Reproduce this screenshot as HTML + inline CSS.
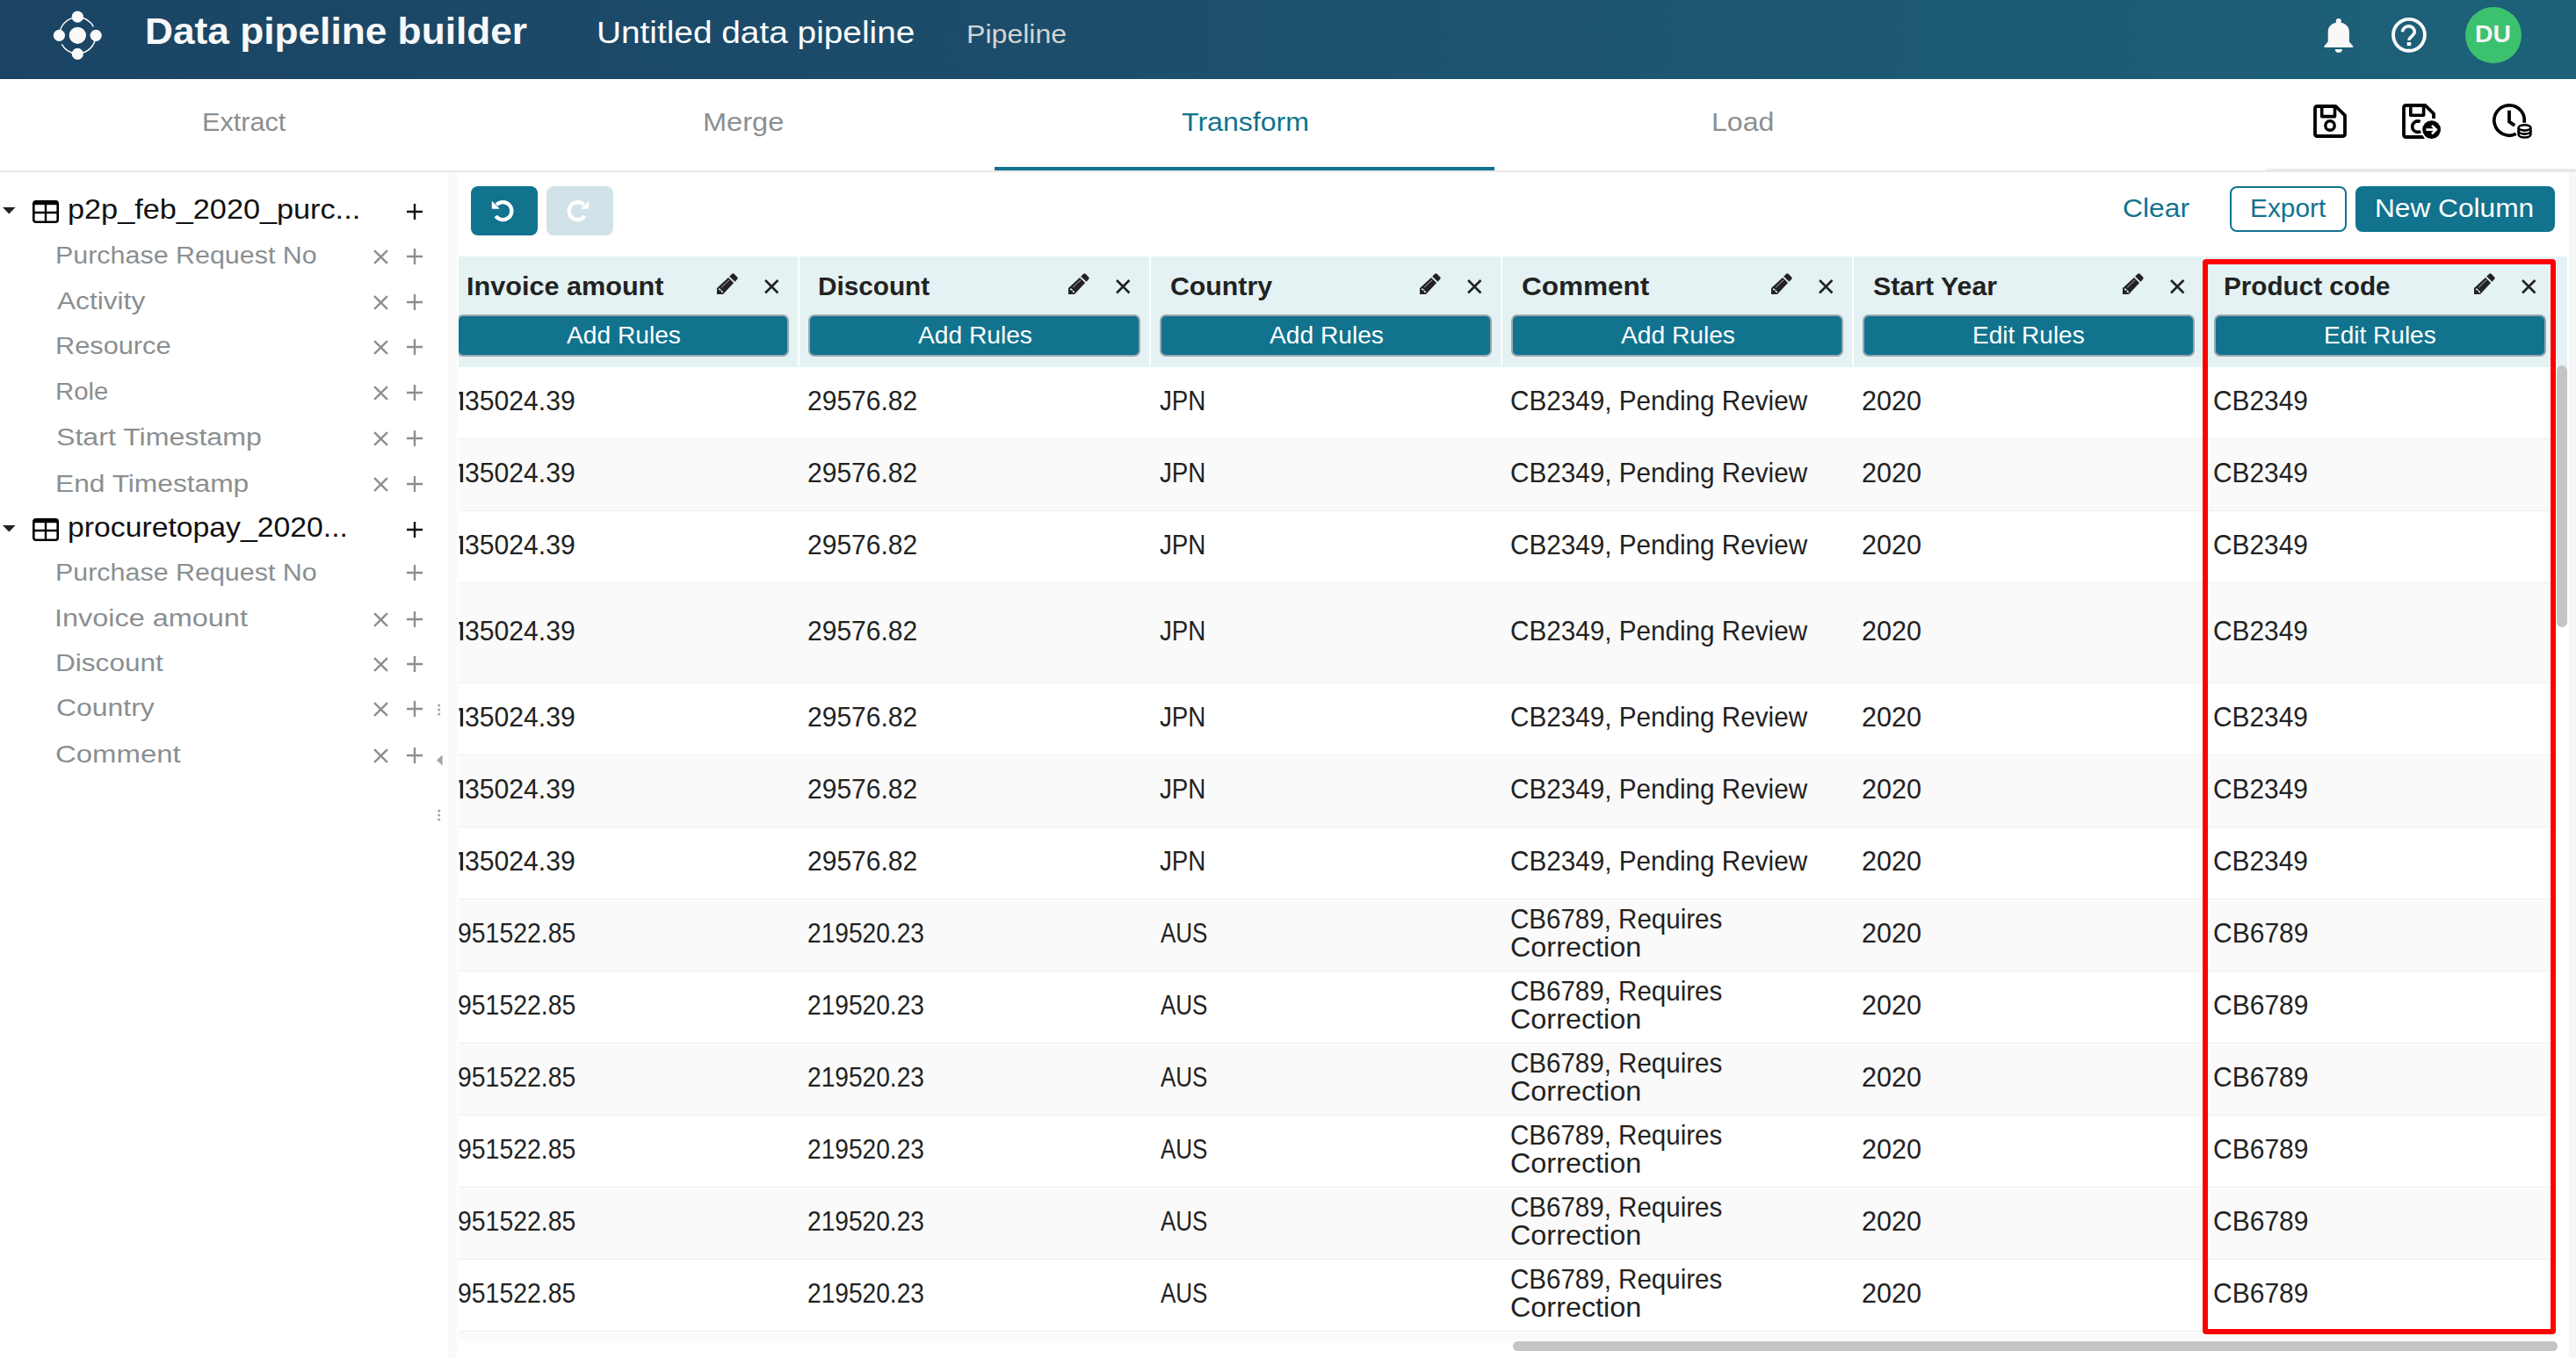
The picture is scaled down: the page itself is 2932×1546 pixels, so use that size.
<!DOCTYPE html><html><head><meta charset="utf-8"><style>
*{margin:0;padding:0}
html,body{width:2932px;height:1546px;overflow:hidden;background:#fff;font-family:"Liberation Sans",sans-serif}
.t{position:absolute;white-space:pre;line-height:1;transform-origin:0 0}
.ic{position:absolute;overflow:visible}
.btn{position:absolute}
.row{position:absolute;left:0;width:2910px;box-sizing:border-box;border-bottom:1.6px solid #eeeeee}
.rb{position:absolute;top:358px;width:378px;height:48px;box-sizing:border-box;border:2px solid #9aa6ae;border-radius:7px;background:#11738e}
.sep{position:absolute;top:292px;width:2px;height:125px;background:#fff}
</style></head><body>
<div style="position:absolute;left:0;top:0;width:2932px;height:90px;background:linear-gradient(90deg,#1b4464 0%,#1c4d6b 40%,#1d6279 100%)"></div>
<svg class="ic" style="left:0;top:0" width="140" height="90" viewBox="0 0 140 90">
<g fill="#fafafa"><circle cx="88.3" cy="40.3" r="9.6"/><circle cx="88.3" cy="19.2" r="6.6"/><circle cx="88.3" cy="61.3" r="6.6"/><circle cx="67.4" cy="40.3" r="6.6"/><circle cx="109.2" cy="40.3" r="6.6"/></g>
<path d="M67.78 38.50A20.6 20.6 0 0 1 86.50 19.78 M90.10 19.78A20.6 20.6 0 0 1 106.32 30.31 M108.82 42.10A20.6 20.6 0 0 1 90.10 60.82 M86.50 60.82A20.6 20.6 0 0 1 70.28 50.29" fill="none" stroke="#fafafa" stroke-width="1.5"/>
</svg><svg class="ic" style="left:2635px;top:10px" width="60" height="60" viewBox="0 0 60 60">
<circle cx="26.8" cy="14" r="3.1" fill="#f8f8f8"/>
<path fill="#f8f8f8" d="M14.7 37.6V26.3C14.7 19.8 19.9 15.6 26.8 15.6C33.7 15.6 38.9 19.8 38.9 26.3V37.6L43.2 42.4V44H10.4V42.4Z"/>
<path fill="#f8f8f8" d="M22.8 45.9H30.9A4.05 3.9 0 0 1 22.8 45.9Z"/>
</svg><svg class="ic" style="left:2722px;top:20px" width="40" height="40" viewBox="0 0 40 40">
<circle cx="19.95" cy="19.85" r="17.95" fill="none" stroke="#fafafa" stroke-width="3.9"/>
<path d="M12.4 16.3A7.3 7.3 0 0 1 19.7 9.9A6.6 6.3 0 0 1 26.3 16.2C26.3 20.3 20 22 20 26.1" fill="none" stroke="#fafafa" stroke-width="3.6"/>
<rect x="17.7" y="28" width="4.5" height="4.1" fill="#fafafa"/>
</svg><div style="position:absolute;left:2806px;top:8px;width:64px;height:64px;border-radius:50%;background:#3cc26f"></div>
<div style="position:absolute;left:0;top:194px;width:2932px;height:2px;background:#e8e8e8"></div>
<div style="position:absolute;left:2580px;top:192px;width:352px;height:2px;background:#ebebeb"></div>
<div style="position:absolute;left:1132px;top:190px;width:569px;height:4px;background:#11738e"></div>
<svg class="ic" style="left:2633px;top:119px" width="38" height="38" viewBox="0 0 38 38">
<path d="M4 2H25.5L36 12.3V33.5Q36 36 33.5 36H4.5Q2 36 2 33.5V4.5Q2 2 4.5 2Z" fill="none" stroke="#000" stroke-width="3.8" stroke-linejoin="round"/>
<path d="M9.7 2.5V13.6H24.5V2.5" fill="none" stroke="#000" stroke-width="3.6" stroke-linejoin="round"/>
<circle cx="19" cy="24" r="5.2" fill="none" stroke="#000" stroke-width="3.4"/>
</svg><svg class="ic" style="left:2734px;top:118px" width="46" height="42" viewBox="0 0 46 42">
<path d="M25.5 38H4.5Q2 38 2 35.5V4.5Q2 2 4.5 2H26.5L36 11.5V17" fill="none" stroke="#000" stroke-width="3.8" stroke-linejoin="round"/>
<path d="M9.8 2.5V13.2H24.6V2.5" fill="none" stroke="#000" stroke-width="3.6" stroke-linejoin="round"/>
<path d="M20.6 20.6 A6.2 6.2 0 1 0 21.2 31.4" fill="none" stroke="#000" stroke-width="3.6"/>
<circle cx="33.6" cy="29.6" r="12.2" fill="#fff"/>
<circle cx="33.6" cy="29.6" r="10.4" fill="#000"/>
<path d="M27.4 29.6H38.4M34 24.8L38.8 29.6L34 34.4" fill="none" stroke="#fff" stroke-width="2.6"/>
</svg><svg class="ic" style="left:2836px;top:117px" width="48" height="42" viewBox="0 0 48 42">
<path d="M37 22.8A17.2 17.2 0 1 0 27.7 35.4" fill="none" stroke="#000" stroke-width="3.7"/>
<path d="M20 8.8V21.5L26.2 25.9" fill="none" stroke="#000" stroke-width="3.8"/>
<g fill="none" stroke="#000" stroke-width="2.6">
<ellipse cx="37.5" cy="28.4" rx="6.9" ry="3.2"/>
<path d="M30.6 28.4V36C30.6 38.1 33.7 39.5 37.5 39.5S44.4 38.1 44.4 36V28.4"/>
<path d="M30.6 32.1C30.6 34.2 33.7 35.6 37.5 35.6S44.4 34.2 44.4 32.1"/>
</g>
</svg>
<div style="position:absolute;left:510px;top:196px;width:10px;height:1350px;background:#f9f9f9"></div>
<div style="position:absolute;left:2924px;top:196px;width:8px;height:1350px;background:#f7f7f7"></div>
<svg class="ic" style="left:2.6px;top:236px" width="15" height="8" viewBox="0 0 15 8"><path d="M0 0H14.6L7.3 7.5Z" fill="#222"/></svg><svg class="ic" style="left:37px;top:228px" width="30" height="26" viewBox="0 0 30 26"><rect x="1.3" y="1.3" width="27.4" height="23.4" rx="2.5" fill="none" stroke="#000" stroke-width="2.6"/><rect x="1" y="1" width="28" height="4.2" fill="#000"/><path d="M15 3V25M1.5 14H28.5" stroke="#000" stroke-width="2.4"/></svg><svg class="ic" style="left:2.6px;top:598px" width="15" height="8" viewBox="0 0 15 8"><path d="M0 0H14.6L7.3 7.5Z" fill="#222"/></svg><svg class="ic" style="left:37px;top:590px" width="30" height="26" viewBox="0 0 30 26"><rect x="1.3" y="1.3" width="27.4" height="23.4" rx="2.5" fill="none" stroke="#000" stroke-width="2.6"/><rect x="1" y="1" width="28" height="4.2" fill="#000"/><path d="M15 3V25M1.5 14H28.5" stroke="#000" stroke-width="2.4"/></svg><svg class="ic" style="left:463px;top:231.9px" width="18" height="18" viewBox="0 0 18 18"><path d="M9.0 0V18M0 9.0H18" stroke="#111" stroke-width="2.4"/></svg><svg class="ic" style="left:463px;top:594px" width="18" height="18" viewBox="0 0 18 18"><path d="M9.0 0V18M0 9.0H18" stroke="#111" stroke-width="2.4"/></svg><svg class="ic" style="left:424.5px;top:283.8px" width="17" height="17" viewBox="0 0 16 16"><path d="M1 1L15 15M15 1L1 15" stroke="#8a8f91" stroke-width="2.26" stroke-linecap="butt"/></svg><svg class="ic" style="left:463px;top:282.8px" width="18" height="18" viewBox="0 0 18 18"><path d="M9.0 0V18M0 9.0H18" stroke="#8a8f91" stroke-width="2.4"/></svg><svg class="ic" style="left:424.5px;top:336.0px" width="17" height="17" viewBox="0 0 16 16"><path d="M1 1L15 15M15 1L1 15" stroke="#8a8f91" stroke-width="2.26" stroke-linecap="butt"/></svg><svg class="ic" style="left:463px;top:335.0px" width="18" height="18" viewBox="0 0 18 18"><path d="M9.0 0V18M0 9.0H18" stroke="#8a8f91" stroke-width="2.4"/></svg><svg class="ic" style="left:424.5px;top:387.1px" width="17" height="17" viewBox="0 0 16 16"><path d="M1 1L15 15M15 1L1 15" stroke="#8a8f91" stroke-width="2.26" stroke-linecap="butt"/></svg><svg class="ic" style="left:463px;top:386.1px" width="18" height="18" viewBox="0 0 18 18"><path d="M9.0 0V18M0 9.0H18" stroke="#8a8f91" stroke-width="2.4"/></svg><svg class="ic" style="left:424.5px;top:439.3px" width="17" height="17" viewBox="0 0 16 16"><path d="M1 1L15 15M15 1L1 15" stroke="#8a8f91" stroke-width="2.26" stroke-linecap="butt"/></svg><svg class="ic" style="left:463px;top:438.3px" width="18" height="18" viewBox="0 0 18 18"><path d="M9.0 0V18M0 9.0H18" stroke="#8a8f91" stroke-width="2.4"/></svg><svg class="ic" style="left:424.5px;top:491.1px" width="17" height="17" viewBox="0 0 16 16"><path d="M1 1L15 15M15 1L1 15" stroke="#8a8f91" stroke-width="2.26" stroke-linecap="butt"/></svg><svg class="ic" style="left:463px;top:490.1px" width="18" height="18" viewBox="0 0 18 18"><path d="M9.0 0V18M0 9.0H18" stroke="#8a8f91" stroke-width="2.4"/></svg><svg class="ic" style="left:424.5px;top:543.4px" width="17" height="17" viewBox="0 0 16 16"><path d="M1 1L15 15M15 1L1 15" stroke="#8a8f91" stroke-width="2.26" stroke-linecap="butt"/></svg><svg class="ic" style="left:463px;top:542.4px" width="18" height="18" viewBox="0 0 18 18"><path d="M9.0 0V18M0 9.0H18" stroke="#8a8f91" stroke-width="2.4"/></svg><svg class="ic" style="left:463px;top:643.4px" width="18" height="18" viewBox="0 0 18 18"><path d="M9.0 0V18M0 9.0H18" stroke="#8a8f91" stroke-width="2.4"/></svg><svg class="ic" style="left:424.5px;top:696.5px" width="17" height="17" viewBox="0 0 16 16"><path d="M1 1L15 15M15 1L1 15" stroke="#8a8f91" stroke-width="2.26" stroke-linecap="butt"/></svg><svg class="ic" style="left:463px;top:695.5px" width="18" height="18" viewBox="0 0 18 18"><path d="M9.0 0V18M0 9.0H18" stroke="#8a8f91" stroke-width="2.4"/></svg><svg class="ic" style="left:424.5px;top:747.8px" width="17" height="17" viewBox="0 0 16 16"><path d="M1 1L15 15M15 1L1 15" stroke="#8a8f91" stroke-width="2.26" stroke-linecap="butt"/></svg><svg class="ic" style="left:463px;top:746.8px" width="18" height="18" viewBox="0 0 18 18"><path d="M9.0 0V18M0 9.0H18" stroke="#8a8f91" stroke-width="2.4"/></svg><svg class="ic" style="left:424.5px;top:799.0px" width="17" height="17" viewBox="0 0 16 16"><path d="M1 1L15 15M15 1L1 15" stroke="#8a8f91" stroke-width="2.26" stroke-linecap="butt"/></svg><svg class="ic" style="left:463px;top:798.0px" width="18" height="18" viewBox="0 0 18 18"><path d="M9.0 0V18M0 9.0H18" stroke="#8a8f91" stroke-width="2.4"/></svg><svg class="ic" style="left:424.5px;top:851.6999999999999px" width="17" height="17" viewBox="0 0 16 16"><path d="M1 1L15 15M15 1L1 15" stroke="#8a8f91" stroke-width="2.26" stroke-linecap="butt"/></svg><svg class="ic" style="left:463px;top:850.6999999999999px" width="18" height="18" viewBox="0 0 18 18"><path d="M9.0 0V18M0 9.0H18" stroke="#8a8f91" stroke-width="2.4"/></svg><svg class="ic" style="left:496px;top:800px" width="8" height="140" viewBox="0 0 8 140">
<g fill="#a6a6a6"><circle cx="3.7" cy="3" r="1.6"/><circle cx="3.7" cy="8" r="1.6"/><circle cx="3.7" cy="13" r="1.6"/>
<circle cx="3.7" cy="123" r="1.6"/><circle cx="3.7" cy="128" r="1.6"/><circle cx="3.7" cy="133" r="1.6"/></g>
<path d="M0.8 65.5L7.6 59.5V71.5Z" fill="#a6a6a6"/>
</svg>
<div class="btn" style="left:536px;top:212px;width:76px;height:56px;background:#11738e;border-radius:8px"></div>
<svg class="ic" style="left:559px;top:227px" width="26" height="26" viewBox="0 0 26 26">
<path d="M6.2 6.2A10 10 0 1 1 5.3 19" fill="none" stroke="#fff" stroke-width="4.3"/>
<path d="M0.8 1.7L0.8 10.7L9.8 10.7Z" fill="#fff"/>
</svg>
<div class="btn" style="left:622px;top:212px;width:76px;height:56px;background:#d1e3e9;border-radius:8px"></div>
<svg class="ic" style="left:645px;top:227px" width="26" height="26" viewBox="0 0 26 26">
<path d="M19.8 6.2A10 10 0 1 0 20.7 19" fill="none" stroke="#fff" stroke-width="4.3"/>
<path d="M25.2 1.7L25.2 10.7L16.2 10.7Z" fill="#fff"/>
</svg><div class="btn" style="left:2538px;top:212px;width:133px;height:52px;border:2px solid #11738e;box-sizing:border-box;border-radius:8px;background:#fff"></div>
<div class="btn" style="left:2681px;top:212px;width:227px;height:52px;background:#11738e;border-radius:8px"></div>
<div style="position:absolute;left:522px;top:292px;width:2400px;height:1254px;overflow:hidden">
 <div style="position:absolute;left:-522px;top:-292px;width:2932px;height:1546px">
  <div style="position:absolute;left:0;top:292px;width:2932px;height:125.5px;background:#e4f2f3"></div>
  <div class="sep" style="left:908px"></div><div class="sep" style="left:1308px"></div><div class="sep" style="left:1708px"></div><div class="sep" style="left:2108px"></div><div class="sep" style="left:2508px"></div><div class="sep" style="left:2908px"></div>
  <div class="rb" style="left:520px"></div><div class="rb" style="left:920px"></div><div class="rb" style="left:1320px"></div><div class="rb" style="left:1720px"></div><div class="rb" style="left:2120px"></div><div class="rb" style="left:2520px"></div>
  <svg class="ic" style="left:815.8px;top:311px" width="24" height="24" viewBox="0 0 24 24"><path fill="#222" d="M0 17L13 5.1L19.1 10.9L7 23.9L0 23.9Z M14.2 3.7L17.2 0.8Q18.4 -0.3 19.6 0.8L23.2 4.4Q24.3 5.6 23.2 6.8L20.5 9.8Z"/><path d="M5.2 16.2L14.2 7.6" stroke="#e4f2f3" stroke-width="0.75"/><path d="M2.3 17.7L6.7 22" stroke="#e4f2f3" stroke-width="1.7"/><rect x="3.3" y="19.4" width="1.5" height="1.5" fill="#222" transform="rotate(45 4 20.1)"/></svg><svg class="ic" style="left:869.6px;top:317.5px" width="16.5" height="16.5" viewBox="0 0 16 16"><path d="M1 1L15 15M15 1L1 15" stroke="#222" stroke-width="2.52" stroke-linecap="butt"/></svg><svg class="ic" style="left:1215.8px;top:311px" width="24" height="24" viewBox="0 0 24 24"><path fill="#222" d="M0 17L13 5.1L19.1 10.9L7 23.9L0 23.9Z M14.2 3.7L17.2 0.8Q18.4 -0.3 19.6 0.8L23.2 4.4Q24.3 5.6 23.2 6.8L20.5 9.8Z"/><path d="M5.2 16.2L14.2 7.6" stroke="#e4f2f3" stroke-width="0.75"/><path d="M2.3 17.7L6.7 22" stroke="#e4f2f3" stroke-width="1.7"/><rect x="3.3" y="19.4" width="1.5" height="1.5" fill="#222" transform="rotate(45 4 20.1)"/></svg><svg class="ic" style="left:1269.6px;top:317.5px" width="16.5" height="16.5" viewBox="0 0 16 16"><path d="M1 1L15 15M15 1L1 15" stroke="#222" stroke-width="2.52" stroke-linecap="butt"/></svg><svg class="ic" style="left:1615.8px;top:311px" width="24" height="24" viewBox="0 0 24 24"><path fill="#222" d="M0 17L13 5.1L19.1 10.9L7 23.9L0 23.9Z M14.2 3.7L17.2 0.8Q18.4 -0.3 19.6 0.8L23.2 4.4Q24.3 5.6 23.2 6.8L20.5 9.8Z"/><path d="M5.2 16.2L14.2 7.6" stroke="#e4f2f3" stroke-width="0.75"/><path d="M2.3 17.7L6.7 22" stroke="#e4f2f3" stroke-width="1.7"/><rect x="3.3" y="19.4" width="1.5" height="1.5" fill="#222" transform="rotate(45 4 20.1)"/></svg><svg class="ic" style="left:1669.6px;top:317.5px" width="16.5" height="16.5" viewBox="0 0 16 16"><path d="M1 1L15 15M15 1L1 15" stroke="#222" stroke-width="2.52" stroke-linecap="butt"/></svg><svg class="ic" style="left:2015.8px;top:311px" width="24" height="24" viewBox="0 0 24 24"><path fill="#222" d="M0 17L13 5.1L19.1 10.9L7 23.9L0 23.9Z M14.2 3.7L17.2 0.8Q18.4 -0.3 19.6 0.8L23.2 4.4Q24.3 5.6 23.2 6.8L20.5 9.8Z"/><path d="M5.2 16.2L14.2 7.6" stroke="#e4f2f3" stroke-width="0.75"/><path d="M2.3 17.7L6.7 22" stroke="#e4f2f3" stroke-width="1.7"/><rect x="3.3" y="19.4" width="1.5" height="1.5" fill="#222" transform="rotate(45 4 20.1)"/></svg><svg class="ic" style="left:2069.6px;top:317.5px" width="16.5" height="16.5" viewBox="0 0 16 16"><path d="M1 1L15 15M15 1L1 15" stroke="#222" stroke-width="2.52" stroke-linecap="butt"/></svg><svg class="ic" style="left:2415.8px;top:311px" width="24" height="24" viewBox="0 0 24 24"><path fill="#222" d="M0 17L13 5.1L19.1 10.9L7 23.9L0 23.9Z M14.2 3.7L17.2 0.8Q18.4 -0.3 19.6 0.8L23.2 4.4Q24.3 5.6 23.2 6.8L20.5 9.8Z"/><path d="M5.2 16.2L14.2 7.6" stroke="#e4f2f3" stroke-width="0.75"/><path d="M2.3 17.7L6.7 22" stroke="#e4f2f3" stroke-width="1.7"/><rect x="3.3" y="19.4" width="1.5" height="1.5" fill="#222" transform="rotate(45 4 20.1)"/></svg><svg class="ic" style="left:2469.6px;top:317.5px" width="16.5" height="16.5" viewBox="0 0 16 16"><path d="M1 1L15 15M15 1L1 15" stroke="#222" stroke-width="2.52" stroke-linecap="butt"/></svg><svg class="ic" style="left:2815.8px;top:311px" width="24" height="24" viewBox="0 0 24 24"><path fill="#222" d="M0 17L13 5.1L19.1 10.9L7 23.9L0 23.9Z M14.2 3.7L17.2 0.8Q18.4 -0.3 19.6 0.8L23.2 4.4Q24.3 5.6 23.2 6.8L20.5 9.8Z"/><path d="M5.2 16.2L14.2 7.6" stroke="#e4f2f3" stroke-width="0.75"/><path d="M2.3 17.7L6.7 22" stroke="#e4f2f3" stroke-width="1.7"/><rect x="3.3" y="19.4" width="1.5" height="1.5" fill="#222" transform="rotate(45 4 20.1)"/></svg><svg class="ic" style="left:2869.6px;top:317.5px" width="16.5" height="16.5" viewBox="0 0 16 16"><path d="M1 1L15 15M15 1L1 15" stroke="#222" stroke-width="2.52" stroke-linecap="butt"/></svg>
  <div class="row" style="top:417.5px;height:82px;background:#ffffff"></div><div class="row" style="top:499.5px;height:82px;background:#fafafa"></div><div class="row" style="top:581.5px;height:82px;background:#ffffff"></div><div class="row" style="top:663.5px;height:114px;background:#fafafa"></div><div class="row" style="top:777.5px;height:82px;background:#ffffff"></div><div class="row" style="top:859.5px;height:82px;background:#fafafa"></div><div class="row" style="top:941.5px;height:82px;background:#ffffff"></div><div class="row" style="top:1023.5px;height:82px;background:#fafafa"></div><div class="row" style="top:1105.5px;height:82px;background:#ffffff"></div><div class="row" style="top:1187.5px;height:82px;background:#fafafa"></div><div class="row" style="top:1269.5px;height:82px;background:#ffffff"></div><div class="row" style="top:1351.5px;height:82px;background:#fafafa"></div><div class="row" style="top:1433.5px;height:82px;background:#ffffff"></div><div class="row" style="top:1515.5px;height:10.3px;background:#fafafa;border:none"></div>
  <div class="t" style="left:530.95px;top:310.97px;font-size:29.80px;font-weight:700;color:#222222;transform:scaleX(1.0273);">Invoice amount</div><div class="t" style="left:931.00px;top:310.97px;font-size:29.80px;font-weight:700;color:#222222;transform:scaleX(0.9976);">Discount</div><div class="t" style="left:1331.73px;top:310.97px;font-size:29.80px;font-weight:700;color:#222222;transform:scaleX(1.0164);">Country</div><div class="t" style="left:1731.68px;top:310.97px;font-size:29.80px;font-weight:700;color:#222222;transform:scaleX(1.0578);">Comment</div><div class="t" style="left:2131.98px;top:310.97px;font-size:29.80px;font-weight:700;color:#222222;transform:scaleX(1.0186);">Start Year</div><div class="t" style="left:2531.01px;top:310.97px;font-size:29.80px;font-weight:700;color:#222222;transform:scaleX(0.9955);">Product code</div><div class="t" style="left:644.65px;top:367.77px;font-size:27.33px;font-weight:400;color:#fff;transform:scaleX(1.0307);">Add Rules</div><div class="t" style="left:1044.65px;top:367.77px;font-size:27.33px;font-weight:400;color:#fff;transform:scaleX(1.0307);">Add Rules</div><div class="t" style="left:1444.65px;top:367.77px;font-size:27.33px;font-weight:400;color:#fff;transform:scaleX(1.0307);">Add Rules</div><div class="t" style="left:1844.65px;top:367.77px;font-size:27.33px;font-weight:400;color:#fff;transform:scaleX(1.0307);">Add Rules</div><div class="t" style="left:2244.74px;top:367.77px;font-size:27.33px;font-weight:400;color:#fff;transform:scaleX(1.0252);">Edit Rules</div><div class="t" style="left:2644.74px;top:367.77px;font-size:27.33px;font-weight:400;color:#fff;transform:scaleX(1.0252);">Edit Rules</div><div class="t" style="left:529.07px;top:441.16px;font-size:30.52px;font-weight:400;color:#222222;transform:scaleX(0.9880);">35024.39</div><svg class="ic" style="left:521.5px;top:446.10px" width="6" height="21" viewBox="0 0 6 21"><path d="M1.8 0H5.1V21H1.8V3.1H0.5V0Z" fill="#222"/></svg><div class="t" style="left:919.32px;top:441.16px;font-size:30.52px;font-weight:400;color:#222222;transform:scaleX(0.9835);">29576.82</div><div class="t" style="left:1320.35px;top:441.16px;font-size:30.52px;font-weight:400;color:#222222;transform:scaleX(0.9083);">JPN</div><div class="t" style="left:1719.34px;top:441.16px;font-size:30.52px;font-weight:400;color:#222222;transform:scaleX(0.9721);">CB2349, Pending Review</div><div class="t" style="left:2119.30px;top:441.16px;font-size:30.52px;font-weight:400;color:#222222;transform:scaleX(1.0023);">2020</div><div class="t" style="left:2519.33px;top:441.16px;font-size:30.52px;font-weight:400;color:#222222;transform:scaleX(0.9790);">CB2349</div><div class="t" style="left:529.07px;top:523.16px;font-size:30.52px;font-weight:400;color:#222222;transform:scaleX(0.9880);">35024.39</div><svg class="ic" style="left:521.5px;top:528.10px" width="6" height="21" viewBox="0 0 6 21"><path d="M1.8 0H5.1V21H1.8V3.1H0.5V0Z" fill="#222"/></svg><div class="t" style="left:919.32px;top:523.16px;font-size:30.52px;font-weight:400;color:#222222;transform:scaleX(0.9835);">29576.82</div><div class="t" style="left:1320.35px;top:523.16px;font-size:30.52px;font-weight:400;color:#222222;transform:scaleX(0.9083);">JPN</div><div class="t" style="left:1719.34px;top:523.16px;font-size:30.52px;font-weight:400;color:#222222;transform:scaleX(0.9721);">CB2349, Pending Review</div><div class="t" style="left:2119.30px;top:523.16px;font-size:30.52px;font-weight:400;color:#222222;transform:scaleX(1.0023);">2020</div><div class="t" style="left:2519.33px;top:523.16px;font-size:30.52px;font-weight:400;color:#222222;transform:scaleX(0.9790);">CB2349</div><div class="t" style="left:529.07px;top:605.16px;font-size:30.52px;font-weight:400;color:#222222;transform:scaleX(0.9880);">35024.39</div><svg class="ic" style="left:521.5px;top:610.10px" width="6" height="21" viewBox="0 0 6 21"><path d="M1.8 0H5.1V21H1.8V3.1H0.5V0Z" fill="#222"/></svg><div class="t" style="left:919.32px;top:605.16px;font-size:30.52px;font-weight:400;color:#222222;transform:scaleX(0.9835);">29576.82</div><div class="t" style="left:1320.35px;top:605.16px;font-size:30.52px;font-weight:400;color:#222222;transform:scaleX(0.9083);">JPN</div><div class="t" style="left:1719.34px;top:605.16px;font-size:30.52px;font-weight:400;color:#222222;transform:scaleX(0.9721);">CB2349, Pending Review</div><div class="t" style="left:2119.30px;top:605.16px;font-size:30.52px;font-weight:400;color:#222222;transform:scaleX(1.0023);">2020</div><div class="t" style="left:2519.33px;top:605.16px;font-size:30.52px;font-weight:400;color:#222222;transform:scaleX(0.9790);">CB2349</div><div class="t" style="left:529.07px;top:703.16px;font-size:30.52px;font-weight:400;color:#222222;transform:scaleX(0.9880);">35024.39</div><svg class="ic" style="left:521.5px;top:708.10px" width="6" height="21" viewBox="0 0 6 21"><path d="M1.8 0H5.1V21H1.8V3.1H0.5V0Z" fill="#222"/></svg><div class="t" style="left:919.32px;top:703.16px;font-size:30.52px;font-weight:400;color:#222222;transform:scaleX(0.9835);">29576.82</div><div class="t" style="left:1320.35px;top:703.16px;font-size:30.52px;font-weight:400;color:#222222;transform:scaleX(0.9083);">JPN</div><div class="t" style="left:1719.34px;top:703.16px;font-size:30.52px;font-weight:400;color:#222222;transform:scaleX(0.9721);">CB2349, Pending Review</div><div class="t" style="left:2119.30px;top:703.16px;font-size:30.52px;font-weight:400;color:#222222;transform:scaleX(1.0023);">2020</div><div class="t" style="left:2519.33px;top:703.16px;font-size:30.52px;font-weight:400;color:#222222;transform:scaleX(0.9790);">CB2349</div><div class="t" style="left:529.07px;top:801.16px;font-size:30.52px;font-weight:400;color:#222222;transform:scaleX(0.9880);">35024.39</div><svg class="ic" style="left:521.5px;top:806.10px" width="6" height="21" viewBox="0 0 6 21"><path d="M1.8 0H5.1V21H1.8V3.1H0.5V0Z" fill="#222"/></svg><div class="t" style="left:919.32px;top:801.16px;font-size:30.52px;font-weight:400;color:#222222;transform:scaleX(0.9835);">29576.82</div><div class="t" style="left:1320.35px;top:801.16px;font-size:30.52px;font-weight:400;color:#222222;transform:scaleX(0.9083);">JPN</div><div class="t" style="left:1719.34px;top:801.16px;font-size:30.52px;font-weight:400;color:#222222;transform:scaleX(0.9721);">CB2349, Pending Review</div><div class="t" style="left:2119.30px;top:801.16px;font-size:30.52px;font-weight:400;color:#222222;transform:scaleX(1.0023);">2020</div><div class="t" style="left:2519.33px;top:801.16px;font-size:30.52px;font-weight:400;color:#222222;transform:scaleX(0.9790);">CB2349</div><div class="t" style="left:529.07px;top:883.16px;font-size:30.52px;font-weight:400;color:#222222;transform:scaleX(0.9880);">35024.39</div><svg class="ic" style="left:521.5px;top:888.10px" width="6" height="21" viewBox="0 0 6 21"><path d="M1.8 0H5.1V21H1.8V3.1H0.5V0Z" fill="#222"/></svg><div class="t" style="left:919.32px;top:883.16px;font-size:30.52px;font-weight:400;color:#222222;transform:scaleX(0.9835);">29576.82</div><div class="t" style="left:1320.35px;top:883.16px;font-size:30.52px;font-weight:400;color:#222222;transform:scaleX(0.9083);">JPN</div><div class="t" style="left:1719.34px;top:883.16px;font-size:30.52px;font-weight:400;color:#222222;transform:scaleX(0.9721);">CB2349, Pending Review</div><div class="t" style="left:2119.30px;top:883.16px;font-size:30.52px;font-weight:400;color:#222222;transform:scaleX(1.0023);">2020</div><div class="t" style="left:2519.33px;top:883.16px;font-size:30.52px;font-weight:400;color:#222222;transform:scaleX(0.9790);">CB2349</div><div class="t" style="left:529.07px;top:965.16px;font-size:30.52px;font-weight:400;color:#222222;transform:scaleX(0.9880);">35024.39</div><svg class="ic" style="left:521.5px;top:970.10px" width="6" height="21" viewBox="0 0 6 21"><path d="M1.8 0H5.1V21H1.8V3.1H0.5V0Z" fill="#222"/></svg><div class="t" style="left:919.32px;top:965.16px;font-size:30.52px;font-weight:400;color:#222222;transform:scaleX(0.9835);">29576.82</div><div class="t" style="left:1320.35px;top:965.16px;font-size:30.52px;font-weight:400;color:#222222;transform:scaleX(0.9083);">JPN</div><div class="t" style="left:1719.34px;top:965.16px;font-size:30.52px;font-weight:400;color:#222222;transform:scaleX(0.9721);">CB2349, Pending Review</div><div class="t" style="left:2119.30px;top:965.16px;font-size:30.52px;font-weight:400;color:#222222;transform:scaleX(1.0023);">2020</div><div class="t" style="left:2519.33px;top:965.16px;font-size:30.52px;font-weight:400;color:#222222;transform:scaleX(0.9790);">CB2349</div><div class="t" style="left:520.60px;top:1047.16px;font-size:30.52px;font-weight:400;color:#222222;transform:scaleX(0.9307);">951522.85</div><div class="t" style="left:919.42px;top:1047.16px;font-size:30.52px;font-weight:400;color:#222222;transform:scaleX(0.9216);">219520.23</div><div class="t" style="left:1320.80px;top:1047.16px;font-size:30.52px;font-weight:400;color:#222222;transform:scaleX(0.8520);">AUS</div><div class="t" style="left:1719.35px;top:1031.16px;font-size:30.52px;font-weight:400;color:#222222;transform:scaleX(0.9674);">CB6789, Requires</div><div class="t" style="left:1719.21px;top:1063.16px;font-size:30.52px;font-weight:400;color:#222222;transform:scaleX(1.0601);">Correction</div><div class="t" style="left:2119.30px;top:1047.16px;font-size:30.52px;font-weight:400;color:#222222;transform:scaleX(1.0023);">2020</div><div class="t" style="left:2519.32px;top:1047.16px;font-size:30.52px;font-weight:400;color:#222222;transform:scaleX(0.9837);">CB6789</div><div class="t" style="left:520.60px;top:1129.16px;font-size:30.52px;font-weight:400;color:#222222;transform:scaleX(0.9307);">951522.85</div><div class="t" style="left:919.42px;top:1129.16px;font-size:30.52px;font-weight:400;color:#222222;transform:scaleX(0.9216);">219520.23</div><div class="t" style="left:1320.80px;top:1129.16px;font-size:30.52px;font-weight:400;color:#222222;transform:scaleX(0.8520);">AUS</div><div class="t" style="left:1719.35px;top:1113.16px;font-size:30.52px;font-weight:400;color:#222222;transform:scaleX(0.9674);">CB6789, Requires</div><div class="t" style="left:1719.21px;top:1145.16px;font-size:30.52px;font-weight:400;color:#222222;transform:scaleX(1.0601);">Correction</div><div class="t" style="left:2119.30px;top:1129.16px;font-size:30.52px;font-weight:400;color:#222222;transform:scaleX(1.0023);">2020</div><div class="t" style="left:2519.32px;top:1129.16px;font-size:30.52px;font-weight:400;color:#222222;transform:scaleX(0.9837);">CB6789</div><div class="t" style="left:520.60px;top:1211.16px;font-size:30.52px;font-weight:400;color:#222222;transform:scaleX(0.9307);">951522.85</div><div class="t" style="left:919.42px;top:1211.16px;font-size:30.52px;font-weight:400;color:#222222;transform:scaleX(0.9216);">219520.23</div><div class="t" style="left:1320.80px;top:1211.16px;font-size:30.52px;font-weight:400;color:#222222;transform:scaleX(0.8520);">AUS</div><div class="t" style="left:1719.35px;top:1195.16px;font-size:30.52px;font-weight:400;color:#222222;transform:scaleX(0.9674);">CB6789, Requires</div><div class="t" style="left:1719.21px;top:1227.16px;font-size:30.52px;font-weight:400;color:#222222;transform:scaleX(1.0601);">Correction</div><div class="t" style="left:2119.30px;top:1211.16px;font-size:30.52px;font-weight:400;color:#222222;transform:scaleX(1.0023);">2020</div><div class="t" style="left:2519.32px;top:1211.16px;font-size:30.52px;font-weight:400;color:#222222;transform:scaleX(0.9837);">CB6789</div><div class="t" style="left:520.60px;top:1293.16px;font-size:30.52px;font-weight:400;color:#222222;transform:scaleX(0.9307);">951522.85</div><div class="t" style="left:919.42px;top:1293.16px;font-size:30.52px;font-weight:400;color:#222222;transform:scaleX(0.9216);">219520.23</div><div class="t" style="left:1320.80px;top:1293.16px;font-size:30.52px;font-weight:400;color:#222222;transform:scaleX(0.8520);">AUS</div><div class="t" style="left:1719.35px;top:1277.16px;font-size:30.52px;font-weight:400;color:#222222;transform:scaleX(0.9674);">CB6789, Requires</div><div class="t" style="left:1719.21px;top:1309.16px;font-size:30.52px;font-weight:400;color:#222222;transform:scaleX(1.0601);">Correction</div><div class="t" style="left:2119.30px;top:1293.16px;font-size:30.52px;font-weight:400;color:#222222;transform:scaleX(1.0023);">2020</div><div class="t" style="left:2519.32px;top:1293.16px;font-size:30.52px;font-weight:400;color:#222222;transform:scaleX(0.9837);">CB6789</div><div class="t" style="left:520.60px;top:1375.16px;font-size:30.52px;font-weight:400;color:#222222;transform:scaleX(0.9307);">951522.85</div><div class="t" style="left:919.42px;top:1375.16px;font-size:30.52px;font-weight:400;color:#222222;transform:scaleX(0.9216);">219520.23</div><div class="t" style="left:1320.80px;top:1375.16px;font-size:30.52px;font-weight:400;color:#222222;transform:scaleX(0.8520);">AUS</div><div class="t" style="left:1719.35px;top:1359.16px;font-size:30.52px;font-weight:400;color:#222222;transform:scaleX(0.9674);">CB6789, Requires</div><div class="t" style="left:1719.21px;top:1391.16px;font-size:30.52px;font-weight:400;color:#222222;transform:scaleX(1.0601);">Correction</div><div class="t" style="left:2119.30px;top:1375.16px;font-size:30.52px;font-weight:400;color:#222222;transform:scaleX(1.0023);">2020</div><div class="t" style="left:2519.32px;top:1375.16px;font-size:30.52px;font-weight:400;color:#222222;transform:scaleX(0.9837);">CB6789</div><div class="t" style="left:520.60px;top:1457.16px;font-size:30.52px;font-weight:400;color:#222222;transform:scaleX(0.9307);">951522.85</div><div class="t" style="left:919.42px;top:1457.16px;font-size:30.52px;font-weight:400;color:#222222;transform:scaleX(0.9216);">219520.23</div><div class="t" style="left:1320.80px;top:1457.16px;font-size:30.52px;font-weight:400;color:#222222;transform:scaleX(0.8520);">AUS</div><div class="t" style="left:1719.35px;top:1441.16px;font-size:30.52px;font-weight:400;color:#222222;transform:scaleX(0.9674);">CB6789, Requires</div><div class="t" style="left:1719.21px;top:1473.16px;font-size:30.52px;font-weight:400;color:#222222;transform:scaleX(1.0601);">Correction</div><div class="t" style="left:2119.30px;top:1457.16px;font-size:30.52px;font-weight:400;color:#222222;transform:scaleX(1.0023);">2020</div><div class="t" style="left:2519.32px;top:1457.16px;font-size:30.52px;font-weight:400;color:#222222;transform:scaleX(0.9837);">CB6789</div>
 </div>
</div>
<div style="position:absolute;left:1722px;top:1526.5px;width:1189px;height:11px;border-radius:6px;background:#c4c4c4"></div>
<div style="position:absolute;left:2910px;top:416px;width:12px;height:298px;border-radius:6px;background:#c4c4c4"></div>
<div style="position:absolute;left:2507px;top:295px;width:402px;height:1224px;box-sizing:border-box;border:6px solid #ff0000;border-radius:4px"></div>
<div class="t" style="left:165.39px;top:15.22px;font-size:41.86px;font-weight:700;color:#f8f8f8;transform:scaleX(1.0568);">Data pipeline builder</div><div class="t" style="left:679.39px;top:20.05px;font-size:35.47px;font-weight:400;color:#ffffff;transform:scaleX(1.0936);">Untitled data pipeline</div><div class="t" style="left:1099.96px;top:23.18px;font-size:30.38px;font-weight:400;color:#d4d4d4;transform:scaleX(1.0565);">Pipeline</div><div class="t" style="left:2817.01px;top:24.38px;font-size:28.49px;font-weight:700;color:#f5f5f5;transform:scaleX(0.9933);">DU</div><div class="t" style="left:229.94px;top:123.85px;font-size:29.94px;font-weight:400;color:#8a8f91;transform:scaleX(1.0221);">Extract</div><div class="t" style="left:800.28px;top:123.85px;font-size:29.94px;font-weight:400;color:#8a8f91;transform:scaleX(1.0868);">Merge</div><div class="t" style="left:1344.70px;top:123.85px;font-size:29.94px;font-weight:400;color:#11738e;transform:scaleX(1.0719);">Transform</div><div class="t" style="left:1948.43px;top:123.85px;font-size:29.94px;font-weight:400;color:#8a8f91;transform:scaleX(1.0699);">Load</div><div class="t" style="left:76.66px;top:221.62px;font-size:31.98px;font-weight:400;color:#111;transform:scaleX(1.0710);">p2p_feb_2020_purc...</div><div class="t" style="left:77.09px;top:583.72px;font-size:31.98px;font-weight:400;color:#111;transform:scaleX(1.0557);">procuretopay_2020...</div><div class="t" style="left:62.78px;top:275.91px;font-size:28.34px;font-weight:400;color:#8a8f91;transform:scaleX(1.0743);">Purchase Request No</div><div class="t" style="left:65.20px;top:328.11px;font-size:28.34px;font-weight:400;color:#8a8f91;transform:scaleX(1.1173);">Activity</div><div class="t" style="left:62.76px;top:379.21px;font-size:28.34px;font-weight:400;color:#8a8f91;transform:scaleX(1.0845);">Resource</div><div class="t" style="left:62.87px;top:431.41px;font-size:28.34px;font-weight:400;color:#8a8f91;transform:scaleX(1.0374);">Role</div><div class="t" style="left:63.78px;top:483.21px;font-size:28.34px;font-weight:400;color:#8a8f91;transform:scaleX(1.1337);">Start Timestamp</div><div class="t" style="left:62.68px;top:535.51px;font-size:28.34px;font-weight:400;color:#8a8f91;transform:scaleX(1.1189);">End Timestamp</div><div class="t" style="left:62.78px;top:636.51px;font-size:28.34px;font-weight:400;color:#8a8f91;transform:scaleX(1.0743);">Purchase Request No</div><div class="t" style="left:62.34px;top:688.61px;font-size:28.34px;font-weight:400;color:#8a8f91;transform:scaleX(1.1446);">Invoice amount</div><div class="t" style="left:62.69px;top:739.91px;font-size:28.34px;font-weight:400;color:#8a8f91;transform:scaleX(1.1148);">Discount</div><div class="t" style="left:63.51px;top:791.11px;font-size:28.34px;font-weight:400;color:#8a8f91;transform:scaleX(1.1262);">Country</div><div class="t" style="left:63.46px;top:843.81px;font-size:28.34px;font-weight:400;color:#8a8f91;transform:scaleX(1.1621);">Comment</div><div class="t" style="left:2415.88px;top:221.94px;font-size:29.36px;font-weight:400;color:#11738e;transform:scaleX(1.0828);">Clear</div><div class="t" style="left:2560.71px;top:221.94px;font-size:29.36px;font-weight:400;color:#11738e;transform:scaleX(1.0158);">Export</div><div class="t" style="left:2703.27px;top:221.94px;font-size:29.36px;font-weight:400;color:#fff;transform:scaleX(1.0780);">New Column</div>
</body></html>
